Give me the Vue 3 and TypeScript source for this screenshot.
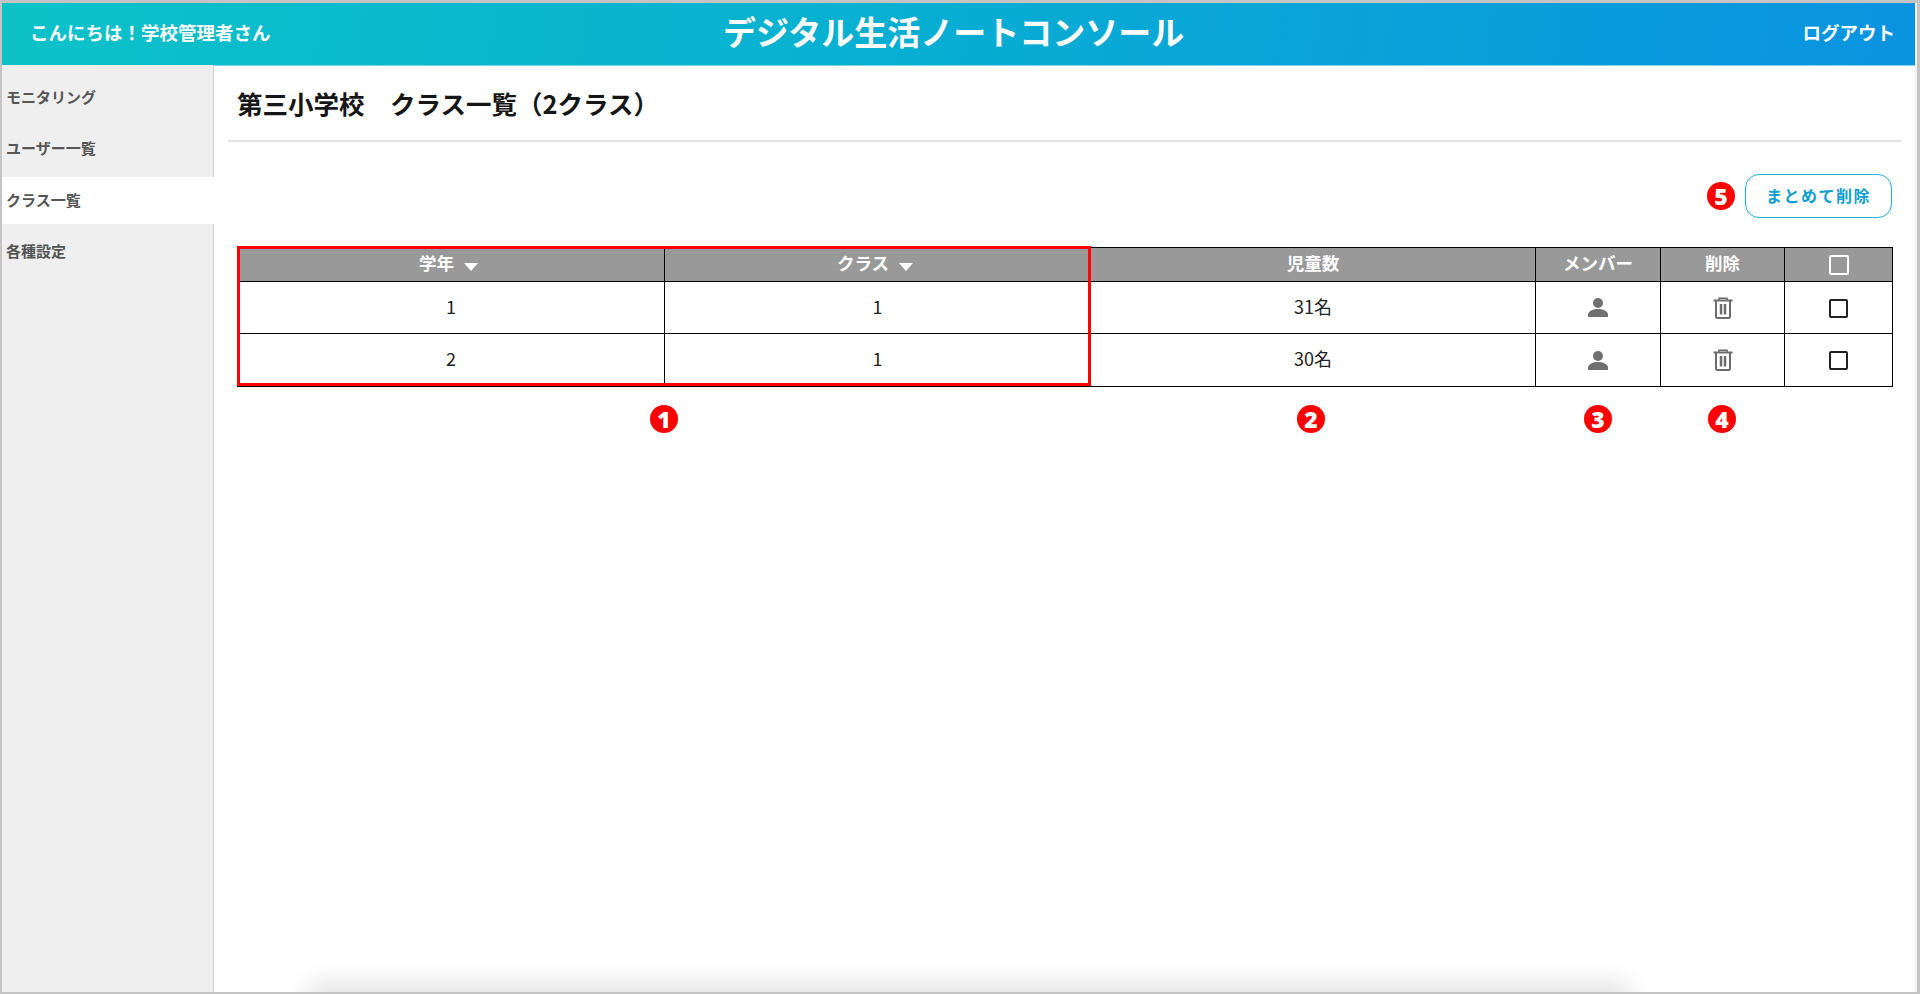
<script setup lang="ts">
interface Row { grade: number; cls: number; count: string }
const rows: Row[] = [
  { grade: 1, cls: 1, count: '31名' },
  { grade: 2, cls: 1, count: '30名' },
]
const menu = ['モニタリング', 'ユーザー一覧', 'クラス一覧', '各種設定']
</script>

<template>
  <div class="frame">
    <div class="page">
      <header class="top">
        <span class="hello">こんにちは！学校管理者さん</span>
        <span class="brand">デジタル生活ノートコンソール</span>
        <span class="logout">ログアウト</span>
      </header>
      <div class="body">
        <nav class="side">
          <a v-for="m in menu" :key="m" class="item" :class="{ on: m === 'クラス一覧' }">{{ m }}</a>
        </nav>
        <main class="main">
          <h1 class="title">第三小学校　クラス一覧（2クラス）</h1>
          <div class="tools">
            <span class="badge">5</span>
            <button class="bulk">まとめて削除</button>
          </div>
          <div class="tablewrap">
            <div class="redbox"></div>
            <table>
              <colgroup>
                <col class="c1" /><col class="c2" /><col class="c3" /><col class="c4" /><col class="c5" /><col class="c6" />
              </colgroup>
              <thead>
                <tr>
                  <th><span class="lift">学年</span><i class="tri"></i></th>
                  <th><span class="lift">クラス</span><i class="tri"></i></th>
                  <th><span class="lift">児童数</span></th>
                  <th><span class="lift">メンバー</span></th>
                  <th><span class="lift">削除</span></th>
                  <th><span class="chk white"></span></th>
                </tr>
              </thead>
              <tbody>
                <tr v-for="r in rows" :key="r.grade">
                  <td><span class="lift">{{ r.grade }}</span></td>
                  <td><span class="lift">{{ r.cls }}</span></td>
                  <td><span class="lift">{{ r.count }}</span></td>
                  <td>
                    <svg class="ico" width="20" height="19" viewBox="0 0 20 19">
                      <circle cx="10" cy="5" r="5" fill="#707070" />
                      <path d="M0 19v-2.500C0 13 5.500 11 10 11s10 2 10 5.500V19z" fill="#707070" />
                    </svg>
                  </td>
                  <td>
                    <svg class="ico" width="20" height="22" viewBox="0 0 20 22" fill="none" stroke="#6c6c6c">
                      <path d="M0.500 3.500h19" stroke-width="2" />
                      <path d="M6 3V1.200h8V3" stroke-width="1.600" />
                      <path d="M3 3.500V19.500a1.500 1.500 0 0 0 1.500 1.500h11a1.500 1.500 0 0 0 1.500-1.500V3.500" stroke-width="2" />
                      <path d="M8 7v10.500M12 7v10.500" stroke-width="2.500" />
                    </svg>
                  </td>
                  <td><span class="chk"></span></td>
                </tr>
              </tbody>
            </table>
          </div>
          <div class="marks">
            <div class="mark m1"><span class="badge">1</span></div>
            <div class="mark m2"><span class="badge">2</span></div>
            <div class="mark m3"><span class="badge">3</span></div>
            <div class="mark m4"><span class="badge">4</span></div>
          </div>
          <div class="shade"></div>
        </main>
      </div>
    </div>
  </div>
</template>

<style>
html, body { margin: 0; background: #fff; }
</style>

<style scoped>
.frame {
  box-sizing: border-box;
  width: 1920px;
  height: 994px;
  border: solid #c4c4c4;
  border-width: 3px 3px 2px 2px;
  font-family: "Noto Sans CJK JP", "Noto Sans", sans-serif;
  color: #1a1a1a;
  overflow: hidden;
  background: #f2f2f2;
}
.page {
  width: 1913px;
  height: 100%;
  display: flex;
  flex-direction: column;
  background: #fff;
}
.top {
  flex: none;
  height: 58px;
  padding: 0 20px 4px 28px;
  background: linear-gradient(100deg, #0cc2c8 0%, #08b2d0 40%, #0a93e0 100%);
  border-bottom: 1px solid #7fd6ea;
  margin-bottom: -1px;
  display: grid;
  grid-template-columns: 693px auto 1fr;
  align-items: center;
  color: #fff;
  font-weight: 700;
}
.hello { font-size: 18.500px; }
.brand { font-size: 33px; line-height: 1; margin-bottom: 2px; }
.logout { font-size: 18.500px; text-align: right; }
.body { flex: 1; display: flex; min-height: 0; }
.side {
  flex: none;
  width: 211px;
  background: #efefef;
  border-right: 1px solid #cfcfcf;
  padding-top: 6px;
  display: flex;
  flex-direction: column;
}
.item {
  height: 51px;
  padding-left: 4px;
  display: flex;
  align-items: center;
  font-size: 15px;
  font-weight: 700;
  color: #555;
}
.item.on {
  background: #fff;
  margin-right: -1px;
  height: 44px;
  padding-bottom: 3px;
  margin-top: 4px;
  margin-bottom: 1px;
  position: relative;
}
.main { flex: 1; min-width: 0; padding: 0 14px; position: relative; }
.title {
  margin: 0;
  height: 75px;
  border-bottom: 2px solid #e2e2e2;
  padding-left: 9px;
  display: flex;
  align-items: center;
  font-size: 25.500px;
  font-weight: 700;
  color: #161616;
}
.tools {
  display: flex;
  justify-content: flex-end;
  align-items: center;
  gap: 10px;
  margin-top: 32px;
  padding-right: 9px;
}
.badge {
  width: 28px;
  height: 28px;
  border-radius: 50%;
  background: #f00;
  color: #fff;
  font: 800 23px/28px "Open Sans", sans-serif;
  text-align: center;
  display: block;
}
.bulk {
  width: 147px;
  height: 44px;
  box-sizing: border-box;
  background: #fff;
  border: 1px solid #1db4dc;
  border-radius: 14px;
  color: #0e9fd0;
  font: 700 16px "Noto Sans CJK JP", sans-serif;
  letter-spacing: 1.500px;
  padding: 0 0 2px;
}
.tablewrap { position: relative; margin: 29px 9px 0 9px; }
.redbox {
  position: absolute;
  left: 0;
  top: -1px;
  width: 854px;
  height: 140px;
  box-sizing: border-box;
  border: 3px solid #f00;
  pointer-events: none;
  z-index: 2;
}
table {
  width: 1655px;
  table-layout: fixed;
  border-collapse: collapse;
  font-size: 18px;
  border: 1px solid #000;
}
.c1 { width: 427px; } .c2 { width: 426px; } .c3 { width: 445px; }
.c4 { width: 125px; } .c5 { width: 124px; } .c6 { width: 108px; }
th, td { border: 1px solid #000; text-align: center; vertical-align: middle; padding: 0; }
th {
  height: 33px;
  background: #999;
  color: #fff;
  font-size: 17.500px;
  font-weight: 700;
  line-height: 1;
}
td { height: 51px; color: #222; }
tbody tr:last-child td { height: 52px; }
.lift { position: relative; top: -2px; }
.tri {
  display: inline-block;
  width: 0;
  height: 0;
  border: 7px solid transparent;
  border-top: 8px solid #fff;
  border-bottom: 0;
  margin: 0 5px 0 10px;
  vertical-align: 1px;
}
.ico { display: block; margin: 0 auto; }
.chk {
  display: block;
  box-sizing: border-box;
  width: 19px;
  height: 19px;
  border: 2px solid #222;
  border-radius: 2px;
  margin: 1px auto 0;
}
.chk.white { border-color: #fff; width: 20px; height: 20px; }
.marks { position: relative; height: 60px; margin: 0 9px; }
.mark { position: absolute; top: 18px; transform: translateX(-50%); }
.m1 { left: 427px; } .m2 { left: 1074px; } .m3 { left: 1361px; } .m4 { left: 1485px; }
.shade {
  position: absolute;
  left: 100px;
  right: 290px;
  bottom: -30px;
  height: 30px;
  border-radius: 10px;
  box-shadow: 0 -2px 24px 8px rgba(0, 0, 0, 0.11);
}
</style>
